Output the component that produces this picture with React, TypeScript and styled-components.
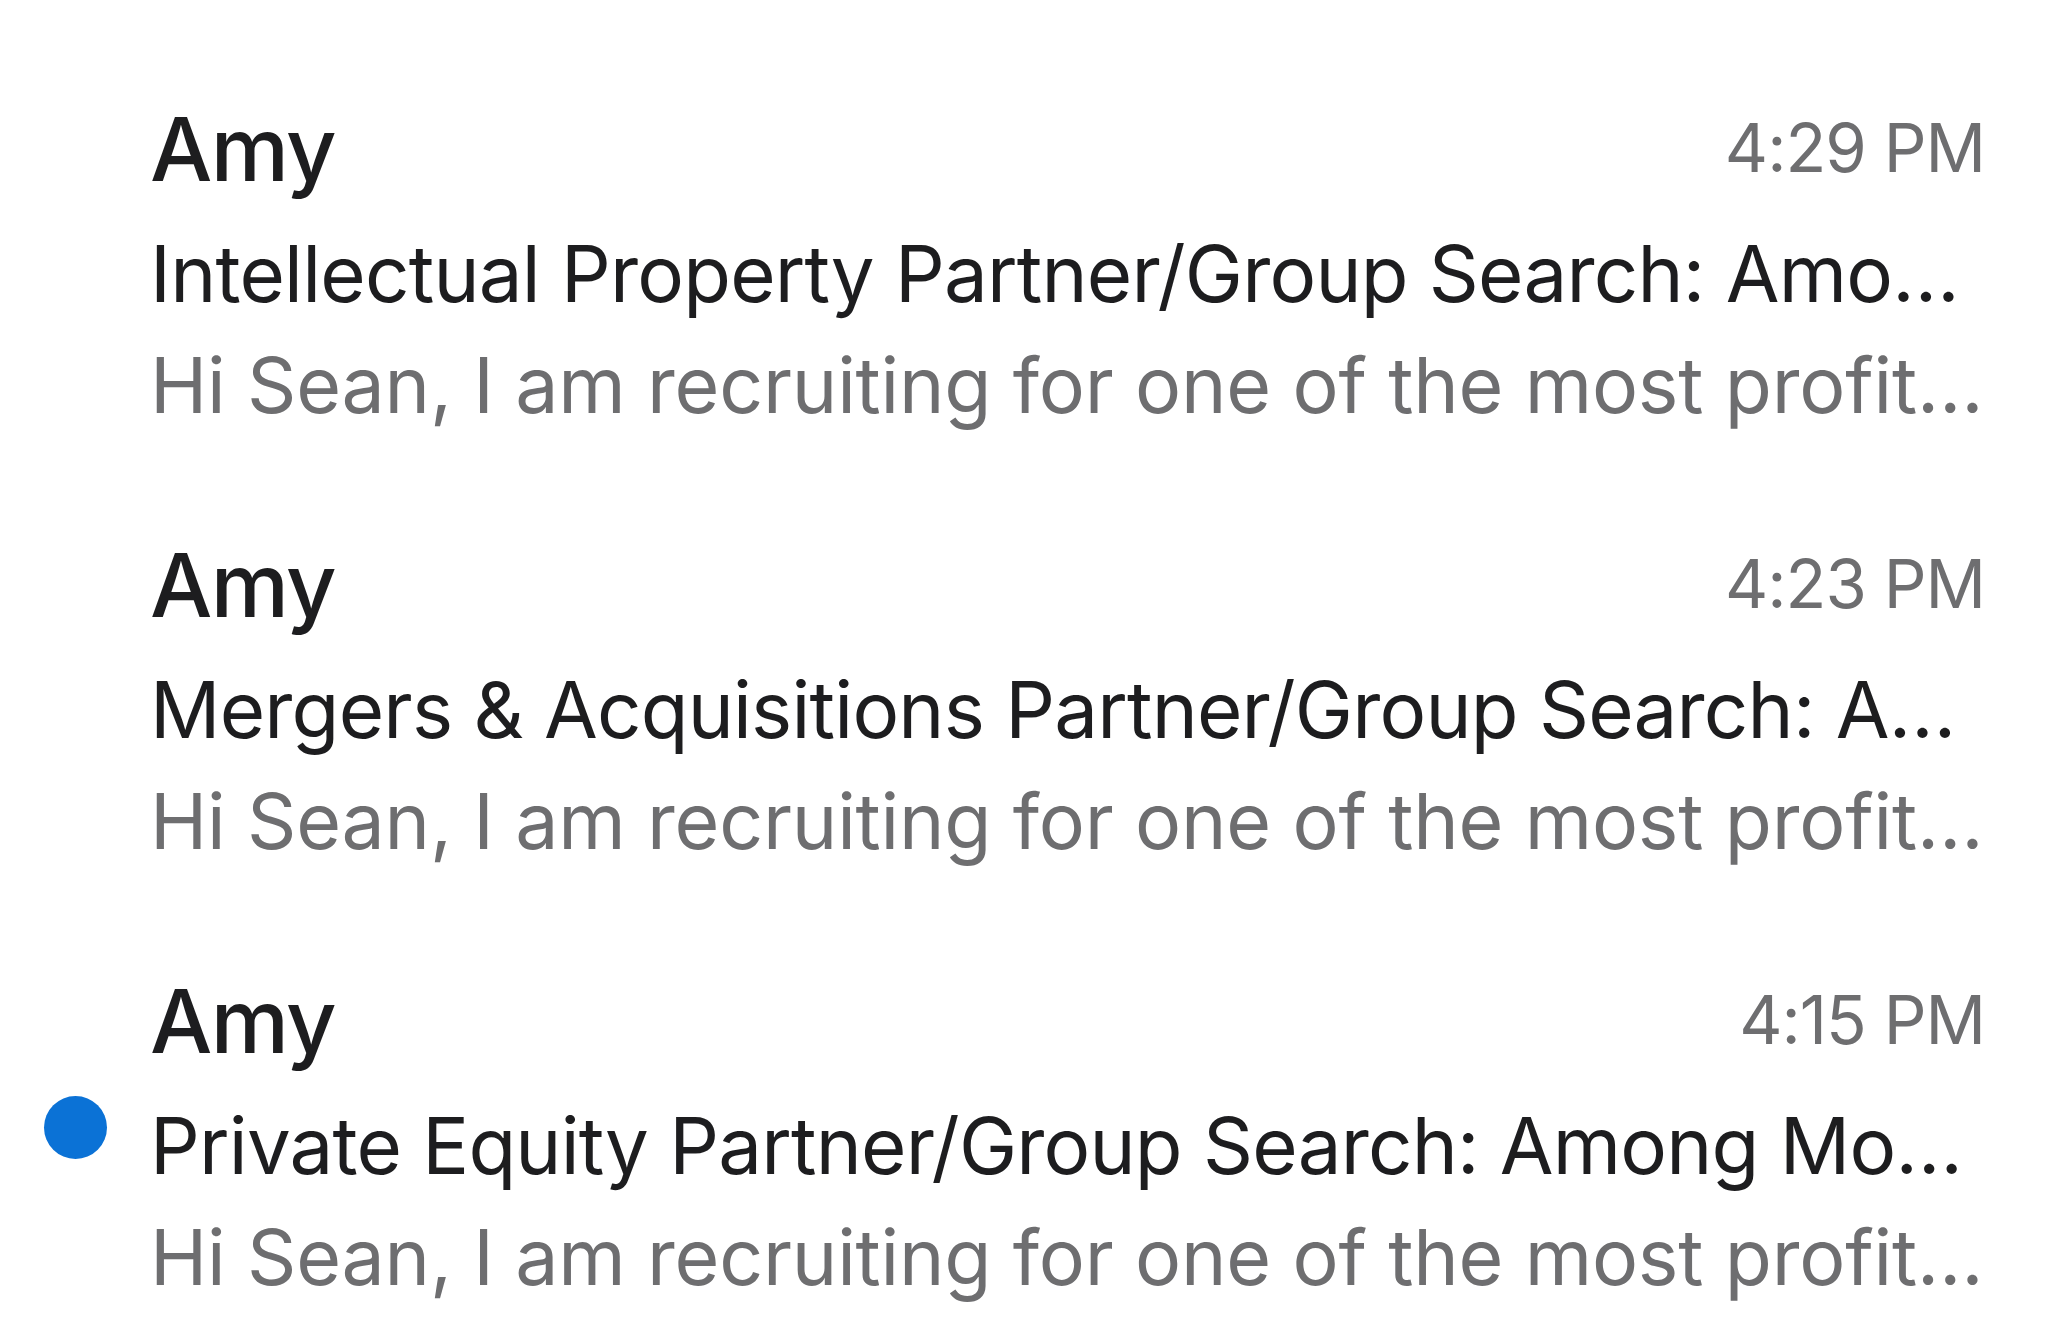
import styled, { createGlobalStyle } from "styled-components";

const GlobalStyle = createGlobalStyle`
    html, body {
        margin: 0;
        padding: 0;
        background: #fff;
    }
    body {
        font-family: Inter, "Noto Sans", "Liberation Sans", sans-serif;
        -webkit-font-smoothing: antialiased;
    }
`;

const List = styled.div`
    display: flex;
    flex-direction: column;
    gap: 83px;
    padding: 84px 63px 0 0;
`;

const Row = styled.div`
    display: grid;
    grid-template-columns: 150px 1fr;
    grid-template-rows: 130px 119px 104px;
`;

const Dot = styled.span`
    grid-column: 1;
    grid-row: 2;
    align-self: start;
    justify-self: center;
    width: 63px;
    height: 63px;
    margin-top: 10px;
    border-radius: 50%;
    background-color: #0b72d6;
`;

const Header = styled.div`
    grid-column: 2;
    grid-row: 1;
    display: flex;
    justify-content: space-between;
    align-items: flex-start;
`;

const Name = styled.span`
    font-size: 88px;
    line-height: 130px;
    font-weight: 500;
    color: #1d1d1f;
    letter-spacing: -1.6px;
`;

const Time = styled.span`
    font-size: 67px;
    line-height: 127px;
    color: #6e6e70;
    letter-spacing: -1px;
`;

const Line = styled.div<{ $muted?: boolean }>`
    grid-column: 2;
    font-size: ${(p) => (p.$muted ? "77px" : "78px")};
    line-height: ${(p) => (p.$muted ? "104px" : "119px")};
    color: ${(p) => (p.$muted ? "#6e6e70" : "#1d1d1f")};
    letter-spacing: ${(p) => (p.$muted ? "-0.2px" : "-0.8px")};
    white-space: nowrap;
    overflow: hidden;
`;

const messages = [
    {
        from: "Amy",
        time: "4:29 PM",
        subject: "Intellectual Property Partner/Group Search: Amo…",
        unread: false,
    },
    {
        from: "Amy",
        time: "4:23 PM",
        subject: "Mergers & Acquisitions Partner/Group Search: A…",
        unread: false,
    },
    {
        from: "Amy",
        time: "4:15 PM",
        subject: "Private Equity Partner/Group Search: Among Mo…",
        unread: true,
    },
];

const preview = "Hi Sean, I am recruiting for one of the most profit…";

function App() {
    return (
        <>
            <GlobalStyle />
            <List>
                {messages.map((m) => (
                    <Row key={m.time}>
                        {m.unread && <Dot />}
                        <Header>
                            <Name>{m.from}</Name>
                            <Time>{m.time}</Time>
                        </Header>
                        <Line>{m.subject}</Line>
                        <Line $muted>{preview}</Line>
                    </Row>
                ))}
            </List>
        </>
    );
}

export default App;
